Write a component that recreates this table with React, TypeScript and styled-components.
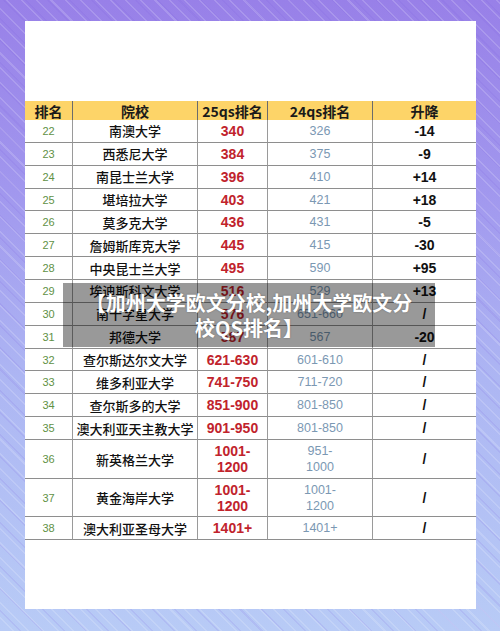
import React from 'react';
import styled, { createGlobalStyle } from 'styled-components';

const GlobalStyle = createGlobalStyle`
  html, body {
    margin: 0;
    padding: 0;
  }
  body {
    font-family: "Noto Sans CJK SC", "Noto Sans", sans-serif;
  }
`;

const Page = styled.div`
  position: relative;
  width: 500px;
  height: 631px;
  box-sizing: border-box;
  padding: 21px 24px 22px 25px;
  overflow: hidden;
  background:
    repeating-linear-gradient(
      45deg,
      rgba(255, 255, 255, 0) 0px,
      rgba(255, 255, 255, 0) 9px,
      rgba(255, 255, 255, 0.16) 9px,
      rgba(255, 255, 255, 0.16) 10.5px
    ),
    repeating-linear-gradient(
      45deg,
      rgba(120, 90, 220, 0) 0px,
      rgba(120, 90, 220, 0) 14px,
      rgba(120, 90, 220, 0.12) 14px,
      rgba(120, 90, 220, 0.12) 15.5px
    ),
    linear-gradient(to bottom, #9880e8 0%, #a197ee 30%, #adb6f3 60%, #b8cbf6 100%);
`;

const Card = styled.div`
  height: 100%;
  background: #ffffff;
  display: flex;
  flex-direction: column;
  padding-top: 80px;
  box-sizing: border-box;
`;

const Grid = styled.div`
  display: grid;
  grid-template-columns: 47px 125px 70px 105px 104px;
`;

const HeadCell = styled.div<{ $first?: boolean }>`
  height: 19px;
  background: #fdd468;
  display: flex;
  align-items: center;
  justify-content: center;
  font-weight: 700;
  font-size: 14px;
  color: #1a1a1a;
  border-left: ${p => (p.$first ? 'none' : '1px solid #6b6b6b')};
  box-sizing: border-box;
`;

const Cell = styled.div<{ $h: number; $first?: boolean }>`
  height: ${p => p.$h}px;
  display: flex;
  align-items: center;
  justify-content: center;
  text-align: center;
  border-bottom: 1px solid #8e8e8e;
  border-left: ${p => (p.$first ? 'none' : '1px solid #9a9a9a')};
  box-sizing: border-box;
`;

const Rank = styled.span`
  font-family: "Liberation Sans", Arial, sans-serif;
  font-size: 11px;
  color: #5f9146;
`;

const School = styled.span`
  font-size: 13px;
  font-weight: 500;
  color: #111111;
`;

const Qs25 = styled.span`
  font-family: "Liberation Sans", Arial, sans-serif;
  font-size: 14px;
  font-weight: 700;
  color: #c1232c;
  line-height: 16px;
`;

const Qs24 = styled.span`
  font-family: "Liberation Sans", Arial, sans-serif;
  font-size: 12.5px;
  color: #7b98b3;
  line-height: 16px;
`;

const Change = styled.span`
  font-family: "Liberation Sans", Arial, sans-serif;
  font-size: 14px;
  font-weight: 700;
  color: #111111;
`;

const Banner = styled.div`
  position: absolute;
  left: 63px;
  top: 283px;
  width: 372px;
  height: 64px;
  box-sizing: border-box;
  padding: 7px 10px;
  background: rgba(0, 0, 0, 0.4);
  color: #ffffff;
  font-size: 20px;
  font-weight: 700;
  line-height: 25px;
  text-align: center;
  text-shadow: 0 0 2px rgba(0, 0, 0, 0.3);
`;

type Row = [string, string, string, string, string, number?];

const rows: Row[] = [
  ['22', '南澳大学', '340', '326', '-14'],
  ['23', '西悉尼大学', '384', '375', '-9'],
  ['24', '南昆士兰大学', '396', '410', '+14'],
  ['25', '堪培拉大学', '403', '421', '+18'],
  ['26', '莫多克大学', '436', '431', '-5'],
  ['27', '詹姆斯库克大学', '445', '415', '-30'],
  ['28', '中央昆士兰大学', '495', '590', '+95'],
  ['29', '埃迪斯科文大学', '516', '529', '+13'],
  ['30', '南十字星大学', '576', '651-660', '/'],
  ['31', '邦德大学', '587', '567', '-20'],
  ['32', '查尔斯达尔文大学', '621-630', '601-610', '/'],
  ['33', '维多利亚大学', '741-750', '711-720', '/'],
  ['34', '查尔斯多的大学', '851-900', '801-850', '/'],
  ['35', '澳大利亚天主教大学', '901-950', '801-850', '/'],
  ['36', '新英格兰大学', '1001-\n1200', '951-\n1000', '/', 39],
  ['37', '黄金海岸大学', '1001-\n1200', '1001-\n1200', '/', 38],
  ['38', '澳大利亚圣母大学', '1401+', '1401+', '/', 23],
];

const multiline = (s: string) =>
  s.split('\n').map((part, i) => (
    <React.Fragment key={i}>
      {i > 0 && <br />}
      {part}
    </React.Fragment>
  ));

const App = () => {
  return (
    <>
      <GlobalStyle />
      <Page>
        <Card>
          <Grid>
            <HeadCell $first>排名</HeadCell>
            <HeadCell>院校</HeadCell>
            <HeadCell>25qs排名</HeadCell>
            <HeadCell>24qs排名</HeadCell>
            <HeadCell>升降</HeadCell>
            {rows.map(([rank, school, q25, q24, change, h]) => {
              const height = h ?? 22.86;
              return (
                <React.Fragment key={rank}>
                  <Cell $h={height} $first>
                    <Rank>{rank}</Rank>
                  </Cell>
                  <Cell $h={height}>
                    <School>{school}</School>
                  </Cell>
                  <Cell $h={height}>
                    <Qs25>{multiline(q25)}</Qs25>
                  </Cell>
                  <Cell $h={height}>
                    <Qs24>{multiline(q24)}</Qs24>
                  </Cell>
                  <Cell $h={height}>
                    <Change>{change}</Change>
                  </Cell>
                </React.Fragment>
              );
            })}
          </Grid>
        </Card>
        <Banner>
          【加州大学欧文分校,加州大学欧文分
          <br />
          校QS排名】
        </Banner>
      </Page>
    </>
  );
};

export default App;
